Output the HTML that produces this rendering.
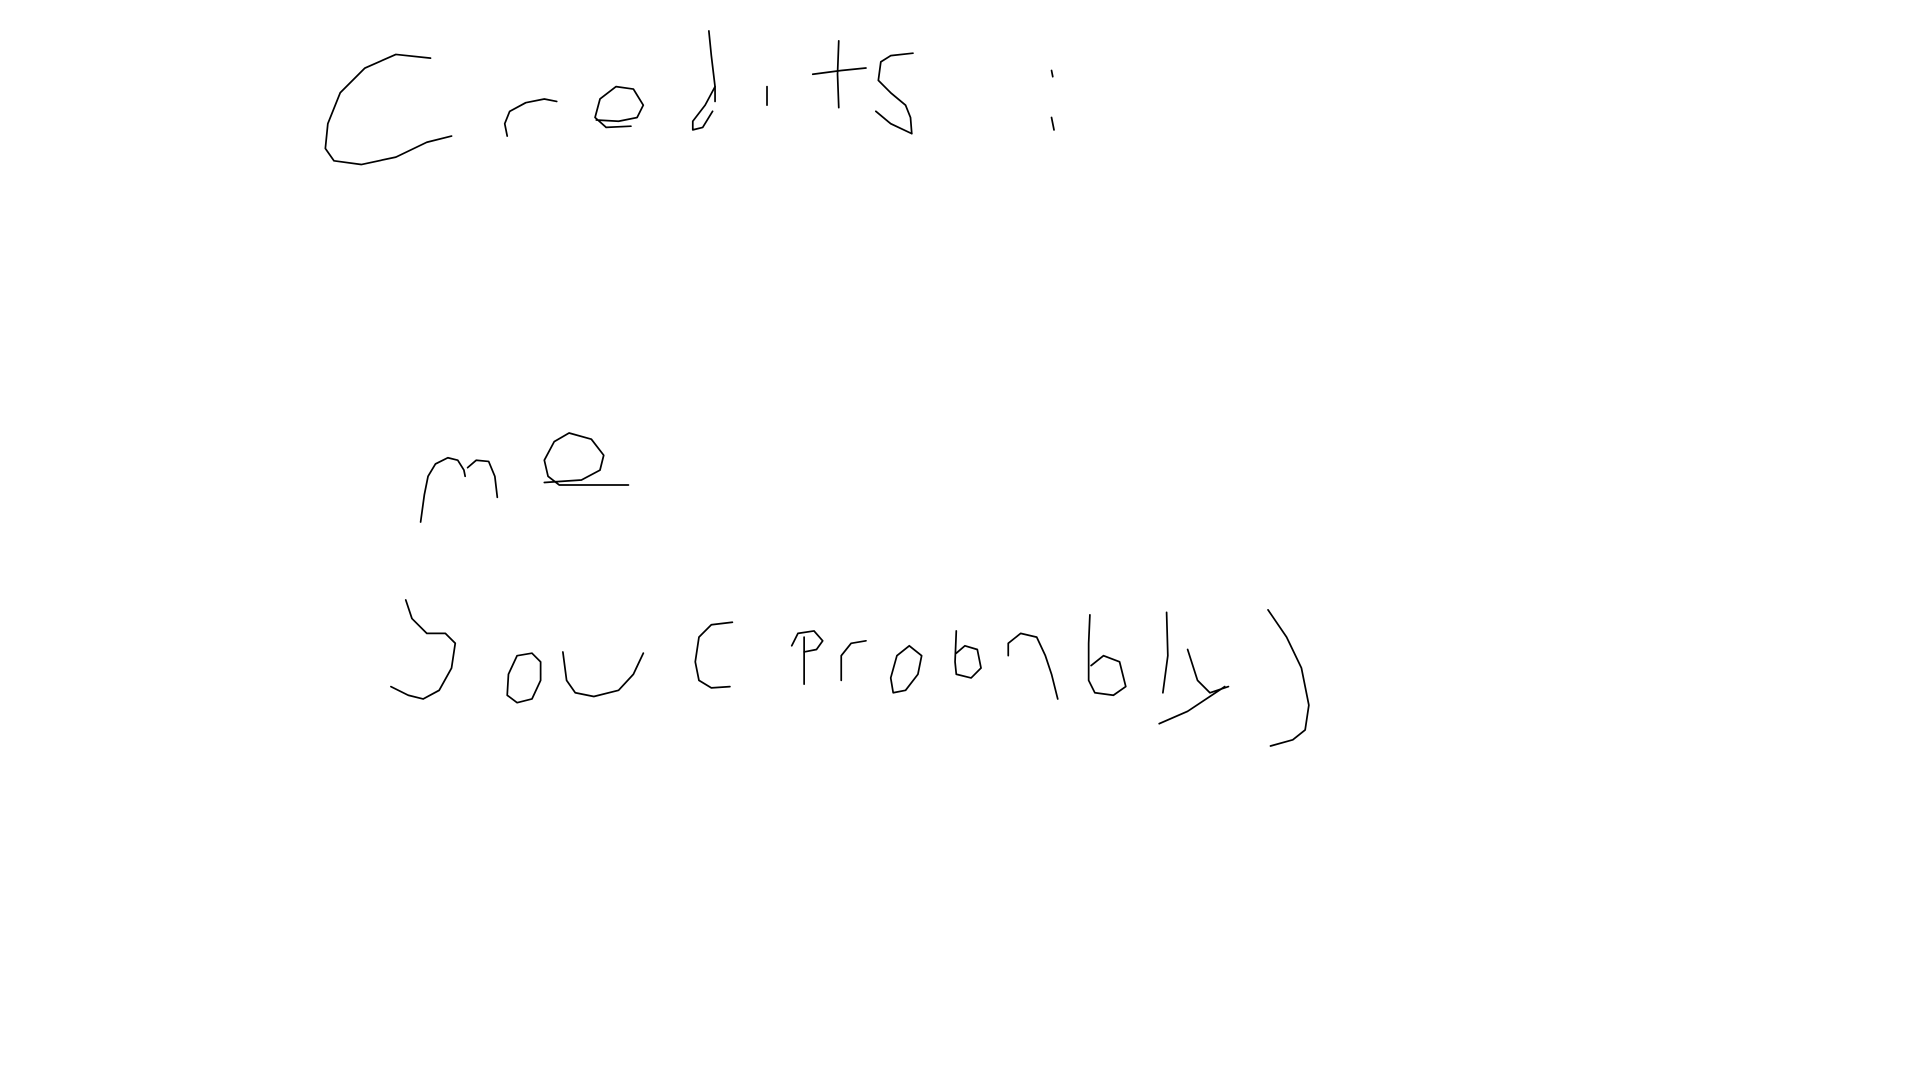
<!DOCTYPE html>
<html><head><meta charset="utf-8"><style>
html,body{margin:0;padding:0;background:#fff;width:1920px;height:1080px;overflow:hidden}
svg{position:absolute;left:0;top:0}
.t{position:absolute;left:-9999px;font-family:"Liberation Sans",sans-serif}
</style></head><body>
<div class="t">Credits : me you (probably)</div>
<svg width="1920" height="1080" viewBox="0 0 1552 873" preserveAspectRatio="none" fill="none" stroke="#000" stroke-width="1.4" stroke-linejoin="round" stroke-linecap="round">
<polyline points="348,47 320,44 295,55 275,75 265,100 263,120 270,130 292,133 320,127 345,115 365,110"/>
<polyline points="410,110 408,100 412,90 425,83 440,80 450,82"/>
<polyline points="482,97 500,98 515,95 520,85 512,72 498,70 485,80 481,95 490,103 510,102"/>
<polyline points="573,25 575,45 578,70 578,82"/>
<polyline points="578,70 570,85 560,98 560,105 568,103 576,90"/>
<polyline points="620,70 620,85"/>
<polyline points="678,33 677,60 678,87"/>
<polyline points="657,60 680,57 700,55"/>
<polyline points="738,43 720,45 712,50 710,65 720,75 732,85 736,95 737,108"/>
<polyline points="708,90 720,100 737,108"/>
<polyline points="850,57 851,62"/>
<polyline points="850,95 852,105"/>
<polyline points="340,422 343,400 346,385 352,375 362,370 370,372 375,380 376,385"/>
<polyline points="378,378 385,372 395,373 400,385 402,402"/>
<polyline points="440,390 470,388 485,380 488,368 478,355 460,350 448,357 440,372 443,385 452,392 508,392"/>
<polyline points="328,485 333,500 345,512 360,512 368,520 365,540 355,558 342,565 330,562 316,555"/>
<polyline points="430,528 418,530 411,545 410,562 418,568 430,565 437,550 437,535 430,528"/>
<polyline points="455,527 458,550 465,560 480,563 500,558 512,545 520,528"/>
<polyline points="592,503 575,505 565,515 562,535 565,550 575,556 590,555"/>
<polyline points="650,515 650,553"/>
<polyline points="640,522 645,512 658,510 665,518 660,525 650,527"/>
<polyline points="680,550 680,530 688,520 700,518"/>
<polyline points="735,522 725,530 720,548 722,560 732,558 742,545 745,530 735,522"/>
<polyline points="773,510 772,535 773,545 785,548 793,540 790,525 780,522 773,528"/>
<polyline points="815,530 815,520 825,512 838,515 845,530 850,545 855,565"/>
<polyline points="881,497 880,520 880,550 885,560 900,562 910,555 905,535 892,530 882,538"/>
<polyline points="943,495 944,530 940,560"/>
<polyline points="960,525 968,550 978,560 993,555"/>
<polyline points="990,555 960,575 937,585"/>
<polyline points="1025,493 1040,515 1052,540 1058,570 1055,590 1045,598 1027,603"/>
</svg>
</body></html>
